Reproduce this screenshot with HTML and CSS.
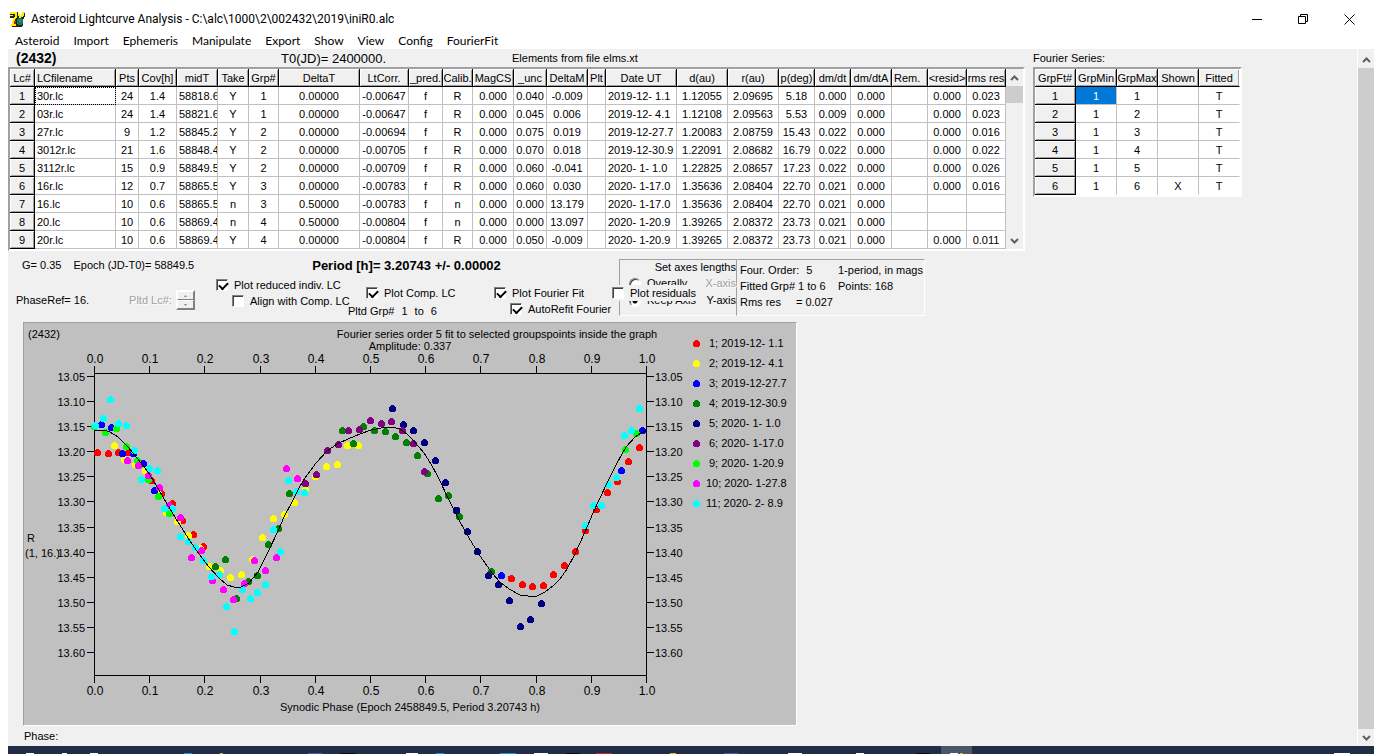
FILE: index.html
```html
<!DOCTYPE html>
<html lang="en">
<head>
<meta charset="utf-8">
<title>Asteroid Lightcurve Analysis</title>
<link rel="stylesheet" href="styles.css">
</head>
<body>
<header class="titlebar">
  <svg class="logo" width="16" height="16" viewBox="0 0 16 16" shape-rendering="crispEdges">
    <path fill="#222" d="M0 1h8v2h1l2 3 1-4h3v3l-2 4v5l-2 2H2v-3l2-6H0z"/>
    <path fill="#fe0" d="M0 1h7v2H0zM5 3h2v3L5 9 4 13H2l1-5 2-3zM12 1h3l-2 5h-2zM8 3h2l1 4H9zM1 13h5v2H1zM0 4h3v1H0z"/>
    <path fill="#a22" d="M4 10h2v3H4z"/>
    <path fill="#187a4a" d="M8 7h4l1 2v3l-2 2H8l-1-2V9z"/>
    <path fill="#38c" d="M9 9h2v2H9z"/>
  </svg>
  <h1 class="title">Asteroid Lightcurve Analysis - C:\alc\1000\2\002432\2019\iniR0.alc</h1>
  <div class="winbtns">
    <button aria-label="Minimize"><svg width="11" height="11"><path d="M0 5.500h10"/></svg></button>
    <button aria-label="Restore"><svg width="11" height="11"><path d="M.5 2.500h7v7h-7zM2.500 2V.5h7v7H8"/></svg></button>
    <button aria-label="Close"><svg width="11" height="11"><path d="M.5.5l10 10M10.500.5l-10 10"/></svg></button>
  </div>
</header>
<nav class="menu">
  <button>Asteroid</button><button>Import</button><button>Ephemeris</button><button>Manipulate</button><button>Export</button><button>Show</button><button>View</button><button>Config</button><button>FourierFit</button>
</nav>
<div class="client">
<main class="content">
  <div class="tables">
    <section class="lcblock">
      <div class="lchead"><b>(2432)</b><span class="t0">T0(JD)= 2400000.</span><span>Elements from file elms.xt</span></div>
      <div class="grid">
        <table class="lc">
          <colgroup><col class="w25"><col class="w81"><col class="w23"><col class="w38"><col class="w41"><col class="w31"><col class="w30"><col class="w81"><col class="w49"><col class="w34"><col class="w30"><col class="w41"><col class="w33"><col class="w41"><col class="w18"><col class="w71"><col class="w51"><col class="w51"><col class="w36"><col class="w36"><col class="w41"><col class="w36"><col class="w39"><col class="w39"></colgroup>
          <thead><tr><th>Lc#</th><th class="l">LCfilename</th><th>Pts</th><th>Cov[h]</th><th>midT</th><th>Take</th><th>Grp#</th><th>DeltaT</th><th>LtCorr.</th><th>_pred.</th><th>Calib.</th><th>MagCS</th><th>_unc</th><th>DeltaM</th><th>Plt</th><th>Date UT</th><th>d(au)</th><th>r(au)</th><th>p(deg)</th><th>dm/dt</th><th>dm/dtA</th><th class="l">Rem.</th><th>&lt;resid&gt;</th><th>rms res</th></tr></thead>
          <tbody>
          <tr><th>1</th><td class="l focus">30r.lc</td><td>24</td><td>1.4</td><td class="l">58818.6</td><td>Y</td><td>1</td><td>0.00000</td><td>-0.00647</td><td>f</td><td>R</td><td>0.000</td><td>0.040</td><td>-0.009</td><td></td><td class="l">2019-12- 1.1</td><td>1.12055</td><td>2.09695</td><td>5.18</td><td>0.000</td><td>0.000</td><td></td><td>0.000</td><td>0.023</td></tr>
          <tr><th>2</th><td class="l">03r.lc</td><td>24</td><td>1.4</td><td class="l">58821.6</td><td>Y</td><td>1</td><td>0.00000</td><td>-0.00647</td><td>f</td><td>R</td><td>0.000</td><td>0.045</td><td>0.006</td><td></td><td class="l">2019-12- 4.1</td><td>1.12108</td><td>2.09563</td><td>5.53</td><td>0.009</td><td>0.000</td><td></td><td>0.000</td><td>0.023</td></tr>
          <tr><th>3</th><td class="l">27r.lc</td><td>9</td><td>1.2</td><td class="l">58845.2</td><td>Y</td><td>2</td><td>0.00000</td><td>-0.00694</td><td>f</td><td>R</td><td>0.000</td><td>0.075</td><td>0.019</td><td></td><td class="l">2019-12-27.7</td><td>1.20083</td><td>2.08759</td><td>15.43</td><td>0.022</td><td>0.000</td><td></td><td>0.000</td><td>0.016</td></tr>
          <tr><th>4</th><td class="l">3012r.lc</td><td>21</td><td>1.6</td><td class="l">58848.4</td><td>Y</td><td>2</td><td>0.00000</td><td>-0.00705</td><td>f</td><td>R</td><td>0.000</td><td>0.070</td><td>0.018</td><td></td><td class="l">2019-12-30.9</td><td>1.22091</td><td>2.08682</td><td>16.79</td><td>0.022</td><td>0.000</td><td></td><td>0.000</td><td>0.022</td></tr>
          <tr><th>5</th><td class="l">3112r.lc</td><td>15</td><td>0.9</td><td class="l">58849.5</td><td>Y</td><td>2</td><td>0.00000</td><td>-0.00709</td><td>f</td><td>R</td><td>0.000</td><td>0.060</td><td>-0.041</td><td></td><td class="l">2020- 1- 1.0</td><td>1.22825</td><td>2.08657</td><td>17.23</td><td>0.022</td><td>0.000</td><td></td><td>0.000</td><td>0.026</td></tr>
          <tr><th>6</th><td class="l">16r.lc</td><td>12</td><td>0.7</td><td class="l">58865.5</td><td>Y</td><td>3</td><td>0.00000</td><td>-0.00783</td><td>f</td><td>R</td><td>0.000</td><td>0.060</td><td>0.030</td><td></td><td class="l">2020- 1-17.0</td><td>1.35636</td><td>2.08404</td><td>22.70</td><td>0.021</td><td>0.000</td><td></td><td>0.000</td><td>0.016</td></tr>
          <tr><th>7</th><td class="l">16.lc</td><td>10</td><td>0.6</td><td class="l">58865.5</td><td>n</td><td>3</td><td>0.50000</td><td>-0.00783</td><td>f</td><td>n</td><td>0.000</td><td>0.000</td><td>13.179</td><td></td><td class="l">2020- 1-17.0</td><td>1.35636</td><td>2.08404</td><td>22.70</td><td>0.021</td><td>0.000</td><td></td><td></td><td></td></tr>
          <tr><th>8</th><td class="l">20.lc</td><td>10</td><td>0.6</td><td class="l">58869.4</td><td>n</td><td>4</td><td>0.50000</td><td>-0.00804</td><td>f</td><td>n</td><td>0.000</td><td>0.000</td><td>13.097</td><td></td><td class="l">2020- 1-20.9</td><td>1.39265</td><td>2.08372</td><td>23.73</td><td>0.021</td><td>0.000</td><td></td><td></td><td></td></tr>
          <tr><th>9</th><td class="l">20r.lc</td><td>10</td><td>0.6</td><td class="l">58869.4</td><td>Y</td><td>4</td><td>0.00000</td><td>-0.00804</td><td>f</td><td>R</td><td>0.000</td><td>0.050</td><td>-0.009</td><td></td><td class="l">2020- 1-20.9</td><td>1.39265</td><td>2.08372</td><td>23.73</td><td>0.021</td><td>0.000</td><td></td><td>0.000</td><td>0.011</td></tr>
          </tbody>
        </table>
        <div class="scroll">
          <button aria-label="Scroll up"><svg width="9" height="6"><path d="M1 5l3.500-3.500L8 5"/></svg></button>
          <div class="thumb short"></div><div class="space"></div>
          <button aria-label="Scroll down"><svg width="9" height="6"><path d="M1 1l3.500 3.500L8 1"/></svg></button>
        </div>
      </div>
    </section>
    <section>
      <div class="fhead">Fourier Series:</div>
      <div class="grid">
        <table class="fs">
          <colgroup><col class="w41"><col class="w41"><col class="w41"><col class="w41"><col class="w41"></colgroup>
          <thead><tr><th>GrpFt#</th><th>GrpMin</th><th>GrpMax</th><th>Shown</th><th>Fitted</th></tr></thead>
          <tbody>
          <tr><th>1</th><td class="sel">1</td><td>1</td><td></td><td>T</td></tr>
          <tr><th>2</th><td>1</td><td>2</td><td></td><td>T</td></tr>
          <tr><th>3</th><td>1</td><td>3</td><td></td><td>T</td></tr>
          <tr><th>4</th><td>1</td><td>4</td><td></td><td>T</td></tr>
          <tr><th>5</th><td>1</td><td>5</td><td></td><td>T</td></tr>
          <tr><th>6</th><td>1</td><td>6</td><td>X</td><td>T</td></tr>
          </tbody>
        </table>
      </div>
    </section>
  </div>

  <div class="controls">
    <div class="left">
      <div class="params"><span>G= 0.35</span><span>Epoch (JD-T0)= 58849.5</span><strong>Period [h]= 3.20743 +/- 0.00002</strong></div>
      <div class="opts">
        <div class="phase"><span>PhaseRef= 16.</span><span class="pltd">Pltd Lc#:</span>
          <span class="spin"><button disabled aria-label="Up"><svg width="3" height="2"><path d="M1 0h1v1h1v1H0V1h1z"/></svg></button><button disabled aria-label="Down"><svg width="3" height="2"><path d="M0 0h3v1H2v1H1V1H0z"/></svg></button></span>
        </div>
        <div class="c1"><label><input type="checkbox" checked>Plot reduced indiv. LC</label><label class="in"><input type="checkbox">Align with Comp. LC</label></div>
        <div class="c2"><label class="in"><input type="checkbox" checked>Plot Comp. LC</label><span class="grp"><span>Pltd Grp#</span><span>1</span><span>to</span><span>6</span></span></div>
        <div class="c3"><label><input type="checkbox" checked>Plot Fourier Fit</label><label class="in"><input type="checkbox" checked>AutoRefit Fourier</label></div>
      </div>
    </div>
    <div class="axes">
      <div class="axt">Set axes lengths</div>
      <div class="axr"><label><input type="radio" name="ax">Overally</label><span class="dis">X-axis</span></div>
      <div class="axr"><label><input type="radio" name="ax" checked>Keep Axis</label><span>Y-axis</span></div>
      <label class="resid"><input type="checkbox">Plot residuals</label>
    </div>
    <div class="fit">
      <span class="pair"><span>Four. Order:</span><span>5</span></span><span>1-period, in mags</span>
      <span>Fitted Grp# 1 to 6</span><span>Points: 168</span>
      <span class="rms"><span>Rms res</span><span>= 0.027</span></span>
    </div>
  </div>

  <div class="chart">
  <svg width="772" height="402" viewBox="24 323 772 402">
    <g class="axis">
      <path d="M94.500 373.500h552v302h-552z"/>
      <path d="M94.500 366v7M149.500 366v7M204.500 366v7M260.500 366v7M315.500 366v7M370.500 366v7M425.500 366v7M480.500 366v7M536.500 366v7M591.500 366v7M646.500 366v7M94.500 676v7M149.500 676v7M204.500 676v7M260.500 676v7M315.500 676v7M370.500 676v7M425.500 676v7M480.500 676v7M536.500 676v7M591.500 676v7M646.500 676v7"/>
      <path d="M87 376.500h7M87 401.500h7M87 426.500h7M87 451.500h7M87 476.500h7M87 501.500h7M87 527.500h7M87 552.500h7M87 577.500h7M87 602.500h7M87 627.500h7M87 652.500h7M647 376.500h7M647 401.500h7M647 426.500h7M647 451.500h7M647 476.500h7M647 501.500h7M647 527.500h7M647 552.500h7M647 577.500h7M647 602.500h7M647 627.500h7M647 652.500h7"/>
    </g>
    <g class="dots" transform="translate(.5 .5)">
      <path stroke="#f00" d="M97 452h0M108 453h0M118 452h0M128 452h0M138 461h0M151 480h0M161 493h0M172 503h0M182 520h0M193 534h0M203 546h0M511 578h0M522 584h0M532 586h0M543 585h0M553 574h0M564 565h0M575 551h0M585 530h0M596 509h0M607 492h0M617 481h0M628 461h0M639 447h0"/>
      <path stroke="#ff0" d="M114 445h0M124 459h0M135 464h0M145 470h0M158 493h0M166 512h0M177 521h0M188 535h0M200 548h0M209 566h0M220 570h0M230 577h0M241 574h0M252 559h0M262 537h0M273 518h0M284 514h0M294 502h0M305 489h0M315 476h0M326 466h0M337 464h0M347 445h0M358 445h0"/>
      <path stroke="#00f" d="M101 424h0M111 427h0M122 453h0M133 453h0M143 463h0M154 490h0M501 575h0M621 470h0M642 430h0"/>
      <path stroke="#008000" d="M215 566h0M225 559h0M236 598h0M248 581h0M257 575h0M268 544h0M278 528h0M289 493h0M342 430h0M353 443h0M363 426h0M374 430h0M385 431h0M395 436h0M406 442h0M417 455h0M427 473h0M438 498h0M448 495h0M459 516h0M491 571h0"/>
      <path stroke="#000080" d="M392 408h0M403 424h0M413 430h0M424 442h0M435 460h0M445 482h0M456 510h0M467 531h0M477 551h0M488 575h0M498 584h0M509 600h0M520 626h0M530 619h0M541 603h0"/>
      <path stroke="#800080" d="M305 483h0M316 474h0M327 450h0M338 444h0M348 430h0M359 429h0M370 420h0M381 423h0M391 421h0M402 430h0M413 443h0M424 471h0"/>
      <path stroke="#0f0" d="M94 426h0M105 432h0M116 428h0M126 446h0M137 460h0M148 479h0M158 496h0M169 513h0M625 449h0M636 433h0"/>
      <path stroke="#f0f" d="M127 460h0M138 465h0M148 475h0M159 487h0M169 505h0M180 517h0M191 557h0M201 550h0M212 580h0M223 589h0M233 599h0M244 583h0M254 560h0M265 570h0M276 557h0M286 468h0M297 478h0"/>
      <path stroke="#0ff" d="M110 399h0M103 418h0M95 425h0M118 423h0M126 425h0M134 450h0M149 468h0M157 470h0M141 479h0M164 508h0M172 508h0M180 536h0M188 541h0M195 547h0M203 560h0M211 576h0M219 574h0M226 606h0M234 631h0M242 589h0M250 598h0M257 592h0M265 584h0M280 551h0M273 529h0M288 480h0M296 491h0M304 492h0M585 525h0M593 505h0M601 505h0M608 484h0M616 477h0M624 435h0M631 430h0M639 408h0"/>
    </g>
    <path class="curve" d="M94 431L98 430L104 430L110 432L118 437L128 447L137 458L148 472L159 490L167 504L178 522L190 541L199 554L209 567L219 578L227 585L234 587L241 587L249 583L258 572L268 552L279 529L284 517L293 500L299 488L305 478L316 463L327 451L337 444L348 439L360 434L371 430L381 428L392 427L400 429L407 434L413 440L424 453L431 464L438 477L449 500L460 522L469 538L478 553L492 573L500 582L509 589L520 595L528 596L537 596L545 592L553 586L560 579L567 569L575 554L585 532L593 513L600 498L608 481L617 463L626 447L635 437L641 433L646 431"/>
    <g class="legend">
      <g class="dots" transform="translate(.5 .5)"><path stroke="#f00" d="M696 343h0"/><path stroke="#ff0" d="M696 363h0"/><path stroke="#00f" d="M696 383h0"/><path stroke="#008000" d="M696 403h0"/><path stroke="#000080" d="M696 423h0"/><path stroke="#800080" d="M696 443h0"/><path stroke="#0f0" d="M696 463h0"/><path stroke="#f0f" d="M696 483h0"/><path stroke="#0ff" d="M696 503h0"/></g>
      <text x="709" y="347">1; 2019-12- 1.1</text><text x="709" y="367">2; 2019-12- 4.1</text><text x="709" y="387">3; 2019-12-27.7</text><text x="709" y="407">4; 2019-12-30.9</text><text x="709" y="427">5; 2020- 1- 1.0</text><text x="709" y="447">6; 2020- 1-17.0</text><text x="709" y="467">9; 2020- 1-20.9</text><text x="706" y="487">10; 2020- 1-27.8</text><text x="706" y="507">11; 2020- 2- 8.9</text>
    </g>
    <text x="28" y="338">(2432)</text>
    <text x="497" y="338" class="m">Fourier series order 5 fit to selected groupspoints inside the graph</text>
    <text x="410" y="350" class="m">Amplitude: 0.337</text>
    <text x="410" y="711" class="m">Synodic Phase (Epoch 2458849.5, Period 3.20743 h)</text>
    <text x="27" y="542">R</text><text x="25" y="557">(1, 16.)</text>
    <g class="m big"><text x="95" y="363">0.0</text><text x="150" y="363">0.1</text><text x="205" y="363">0.2</text><text x="261" y="363">0.3</text><text x="316" y="363">0.4</text><text x="371" y="363">0.5</text><text x="426" y="363">0.6</text><text x="481" y="363">0.7</text><text x="537" y="363">0.8</text><text x="592" y="363">0.9</text><text x="647" y="363">1.0</text><text x="95" y="695">0.0</text><text x="150" y="695">0.1</text><text x="205" y="695">0.2</text><text x="261" y="695">0.3</text><text x="316" y="695">0.4</text><text x="371" y="695">0.5</text><text x="426" y="695">0.6</text><text x="481" y="695">0.7</text><text x="537" y="695">0.8</text><text x="592" y="695">0.9</text><text x="647" y="695">1.0</text></g>
    <g class="e"><text x="85" y="381">13.05</text><text x="85" y="406">13.10</text><text x="85" y="431">13.15</text><text x="85" y="456">13.20</text><text x="85" y="481">13.25</text><text x="85" y="506">13.30</text><text x="85" y="532">13.35</text><text x="85" y="557">13.40</text><text x="85" y="582">13.45</text><text x="85" y="607">13.50</text><text x="85" y="632">13.55</text><text x="85" y="657">13.60</text></g>
    <g><text x="655" y="381">13.05</text><text x="655" y="406">13.10</text><text x="655" y="431">13.15</text><text x="655" y="456">13.20</text><text x="655" y="481">13.25</text><text x="655" y="506">13.30</text><text x="655" y="532">13.35</text><text x="655" y="557">13.40</text><text x="655" y="582">13.45</text><text x="655" y="607">13.50</text><text x="655" y="632">13.55</text><text x="655" y="657">13.60</text></g>
  </svg>
  </div>
  <div class="status">Phase:</div>
</main>
<div class="scroll page">
  <button aria-label="Page up"><svg width="9" height="6"><path d="M1 5l3.500-3.500L8 5"/></svg></button>
  <div class="thumb"></div>
  <button aria-label="Page down"><svg width="9" height="6"><path d="M1 1l3.500 3.500L8 1"/></svg></button>
</div>
</div>
<footer class="taskbar">
  <svg width="1366" height="8" shape-rendering="crispEdges"><path fill="#4b5568" d="M933 0h31v8h-31z"/><path fill="#fff" d="M18 7h8v1h-8zM54 7h5v1h-5zM82 7h8v1h-8zM398 7h12v1h-12zM526 7h14v1h-14zM780 7h14v1h-14zM848 7h8v1h-8zM942 7h8v1h-8zM1326 7h16v1h-16z"/><path fill="#2a8ad4" d="M176 7h8v1h-8zM428 7h8v1h-8zM492 7h16v1h-16z"/><path fill="#c22" d="M588 7h16v1h-16z"/><path fill="#d8b830" d="M212 7h3v1h-3zM662 7h6v1h-6zM952 7h3v1h-3z"/><path fill="#4658b8" d="M300 7h14v1h-14zM716 7h14v1h-14z"/><path fill="#080810" d="M332 7h16v1h-16zM558 7h14v1h-14zM908 7h14v1h-14z"/></svg>
</footer>
</body>
</html>
```

FILE: styles.css
```css
* { box-sizing: border-box; }
body {
  margin: 0;
  padding: 0 8px;
  height: 100vh;
  overflow: hidden;
  display: flex;
  flex-direction: column;
  background: #fff;
  color: #000;
  font: 11px/13px "Liberation Sans", Arial, sans-serif;
}
button { border: 0; padding: 0; background: none; font: inherit; color: inherit; }
svg { display: block; }

.titlebar { display: flex; align-items: center; height: 31px; padding: 7px 0 0 2px; flex: none; }
.title { flex: 1; margin: 0 0 0 5px; font: 12px/16px Roboto, "Open Sans", sans-serif; }
.winbtns { display: flex; margin-right: 2px; }
.winbtns button { width: 46px; height: 16px; display: flex; align-items: center; justify-content: center; }
.winbtns path { fill: none; stroke: #000; }
.menu { display: flex; gap: 14px; height: 18px; padding: 2px 0 0 7px; flex: none; }
.menu button { font: 12px/16px Lato, "Open Sans", sans-serif; }

.client { flex: 1; min-height: 0; display: flex; background: #f0f0f0; overflow: hidden; }
.content { flex: 1; min-width: 0; }
.tables { display: flex; align-items: flex-start; gap: 8px; }
.lchead { display: grid; grid-template-columns: 265px 231px 1fr; height: 18px; padding-left: 8px; align-items: center; }
.lchead b { font-size: 14px; }
.t0 { font-size: 13px; }
.fhead { height: 18px; line-height: 18px; }

.grid { display: flex; width: max-content; border: 2px solid; border-color: #a0a0a0 #fff #fff #a0a0a0; }
table { table-layout: fixed; border-collapse: separate; border-spacing: 0; background: #fff; }
.lc { width: 996px; }
.fs { width: 205px; }
th, td {
  height: 18px;
  padding: 0;
  overflow: hidden;
  white-space: nowrap;
  text-align: center;
  font-weight: normal;
  line-height: 16px;
  border-right: 1px solid #c0c0c0;
  border-bottom: 1px solid #c0c0c0;
}
th { background: #f0f0f0; border-color: #000; box-shadow: inset 1px 1px #fff, inset -1px -1px #a0a0a0; }
.fs th:last-child, .fs td:last-child { border-right-color: #fff; }
.fs tr:last-child td { border-bottom-color: #fff; }
.l { text-align: left; padding-left: 2px; }
.focus { outline: 1px dotted #000; outline-offset: -1px; }
.sel { background: #0078d7; color: #fff; }
.w18 { width: 18px; } .w23 { width: 23px; } .w25 { width: 25px; } .w30 { width: 30px; }
.w31 { width: 31px; } .w33 { width: 33px; } .w34 { width: 34px; } .w36 { width: 36px; }
.w38 { width: 38px; } .w39 { width: 39px; } .w41 { width: 41px; } .w49 { width: 49px; }
.w51 { width: 51px; } .w71 { width: 71px; } .w81 { width: 81px; }

.scroll { width: 17px; display: flex; flex-direction: column; background: #f0f0f0; }
.scroll button { height: 17px; flex: none; display: flex; align-items: center; justify-content: center; }
.scroll path { fill: none; stroke: #606060; stroke-width: 2; }
.thumb { flex: 1; background: #cdcdcd; }
.short { flex: none; height: 17px; }
.space { flex: 1; }
.page { padding-top: 2px; border-left: 1px solid #fff; }

.controls { display: flex; height: 71px; padding-top: 8px; }
.left { width: 611px; }
.params { display: flex; padding: 0 0 0 14px; gap: 12px; height: 18px; }
.params strong { margin-left: 106px; font-size: 13px; }
.opts { display: flex; }
.phase { width: 208px; display: flex; align-items: center; padding-left: 8px; height: 40px; margin-top: 3px; }
.pltd { margin-left: 40px; color: #a0a0a0; text-shadow: 1px 1px #fff; }
.spin { display: flex; flex-direction: column; width: 19px; margin-left: 4px; border: 1px solid #a0a0a0; border-color: #fff #808080 #808080 #fff; }
.spin button { height: 9px; display: flex; align-items: center; justify-content: center; border: 1px solid; border-color: #fff #808080 #808080 #fff; }
.spin path { fill: #a0a0a0; }
label { display: flex; align-items: center; gap: 6px; height: 16px; white-space: nowrap; }
input { appearance: none; margin: 0; flex: none; width: 12px; height: 12px; background: #fff; border: 1px solid; border-color: #808080 #fff #fff #808080; box-shadow: inset 1px 1px #404040; }
input[type="checkbox"]:checked { position: relative; }
input[type="checkbox"]:checked::after { content: ""; position: absolute; left: 2px; top: 2px; width: 7px; height: 4px; border: solid #000; border-width: 0 0 2px 2px; transform: rotate(-45deg); }
input[type="radio"] { border-radius: 50%; }
input[type="radio"]:checked { background: radial-gradient(#000 2px, #fff 3px); }
.in { margin-left: 16px; }
.c1 { width: 132px; }
.c2 { width: 146px; padding-top: 8px; }
.c2 .in { margin-left: 18px; }
.c3 { padding-top: 8px; }
.grp { display: flex; gap: 7px; padding-top: 4px; }

.axes { position: relative; width: 118px; height: 57px; border: 1px solid; border-color: #a0a0a0 #a0a0a0 #fff #a0a0a0; }
.axt { text-align: right; line-height: 15px; }
.axr { display: flex; justify-content: space-between; padding-left: 9px; height: 17px; align-items: center; }
.dis { color: #a0a0a0; text-shadow: 1px 1px #fff; }
.resid { position: absolute; left: -8px; top: 25px; width: 84px; background: #f0f0f0; }
.fit { display: grid; grid-template-columns: 98px 84px; grid-auto-rows: 16px; height: 57px; width: 188px; padding: 4px 0 0 2px; border: 1px solid; border-color: #a0a0a0 #fff #fff transparent; }
.fit > span { white-space: nowrap; }
.pair { display: flex; gap: 7px; }
.rms { display: flex; gap: 15px; }

.chart { width: max-content; margin-left: 15px; background: #c0c0c0; border: 1px solid; border-color: #a0a0a0 #fff #fff #a0a0a0; }
.axis path { fill: none; stroke: #000; shape-rendering: crispEdges; }
.dots path { stroke-width: 7; stroke-linecap: round; fill: none; shape-rendering: crispEdges; }
.curve { fill: none; stroke: #000; shape-rendering: crispEdges; }
.chart text { font-size: 11px; }
.chart .big text { font-size: 12px; }
.m { text-anchor: middle; }
.e { text-anchor: end; }
.status { padding: 4px 0 0 16px; }
.taskbar { flex: none; height: 8px; background: #212d47; overflow: hidden; }
```
